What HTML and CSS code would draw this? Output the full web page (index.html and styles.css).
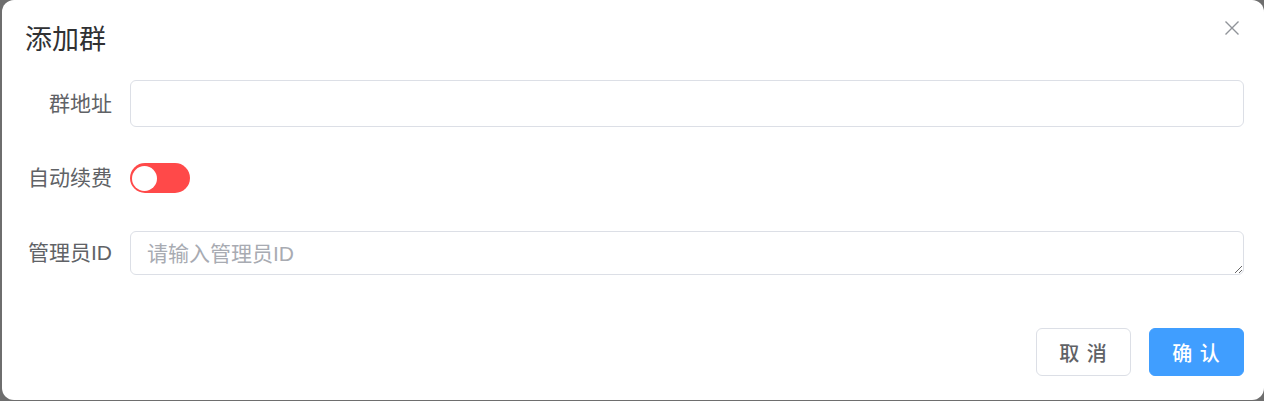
FILE: index.html
```html
<!DOCTYPE html>
<html lang="zh-CN">
<head>
<meta charset="utf-8">
<title>添加群</title>
<link rel="stylesheet" href="styles.css">
</head>
<body>
<div class="dialog">
  <header class="dialog-header">
    <span class="dialog-title">添加群</span>
    <button class="dialog-close" type="button" aria-label="关闭">
      <svg width="14" height="14" viewBox="0 0 14 14"><path d="M0.5 0.5 L13.5 13.5 M13.5 0.5 L0.5 13.5" stroke="#909399" stroke-width="1.4" fill="none"/></svg>
    </button>
  </header>
  <form class="form">
    <div class="row row-addr">
      <label class="label">群地址</label>
      <input class="input" type="text">
    </div>
    <div class="row row-switch">
      <label class="label">自动续费</label>
      <span class="switch"><span class="knob"></span></span>
    </div>
    <div class="row row-admin">
      <label class="label">管理员ID</label>
      <textarea class="textarea" placeholder="请输入管理员ID"></textarea>
    </div>
  </form>
  <footer class="dialog-footer">
    <button class="btn" type="button">取 消</button>
    <button class="btn btn-primary" type="button">确 认</button>
  </footer>
</div>
</body>
</html>
```

FILE: styles.css
```css
html, body {
  margin: 0;
  height: 100%;
  background: #6e6e6e;
  overflow: hidden;
}

.dialog {
  position: relative;
  margin-left: 2px;
  width: 1262px;
  height: 400px;
  box-sizing: border-box;
  background: #fff;
  border-radius: 12px;
  font-family: "Liberation Sans", "Noto Sans CJK SC", sans-serif;
  display: flex;
  flex-direction: column;
}

.dialog-header {
  padding: 22px 23px 0;
  height: 36px;
}

.dialog-title {
  font-size: 27px;
  line-height: 36px;
  color: #303133;
}

.dialog-close {
  position: absolute;
  top: 21px;
  right: 25px;
  width: 14px;
  height: 14px;
  padding: 0;
  border: 0;
  background: none;
  display: block;
}

.dialog-close svg {
  display: block;
}

.form {
  margin: 22px 0 0;
  padding-right: 20px;
}

.row {
  display: grid;
  grid-template-columns: 110px 1fr;
  column-gap: 18px;
  align-items: center;
}

.row-addr {
  height: 47px;
  margin-bottom: 28px;
}

.row-switch {
  height: 46px;
  margin-bottom: 30px;
}

.row-admin {
  height: 44px;
}

.label {
  text-align: right;
  font-size: 21px;
  line-height: 30px;
  color: #606266;
}

.input {
  box-sizing: border-box;
  height: 47px;
  width: 100%;
  border: 1px solid #dcdfe6;
  border-radius: 6px;
  padding: 0 16px;
  font: inherit;
  font-size: 21px;
  outline: none;
}

.textarea {
  box-sizing: border-box;
  display: block;
  height: 44px;
  width: 100%;
  border: 1px solid #dcdfe6;
  border-radius: 6px;
  padding: 6px 16px 0;
  font: inherit;
  font-size: 21px;
  line-height: 31px;
  color: #606266;
  resize: vertical;
  outline: none;
}

.textarea::placeholder {
  color: #a8abb2;
}

.switch {
  box-sizing: border-box;
  width: 60px;
  height: 30px;
  border-radius: 15px;
  background: #ff4949;
  display: flex;
  align-items: center;
  padding: 0 2px;
}

.knob {
  width: 25px;
  height: 25px;
  border-radius: 50%;
  background: #fff;
}

.dialog-footer {
  margin-top: 53px;
  padding-right: 20px;
  display: flex;
  justify-content: flex-end;
  gap: 18px;
}

.btn {
  box-sizing: border-box;
  width: 95px;
  height: 48px;
  border: 1px solid #dcdfe6;
  border-radius: 6px;
  background: #fff;
  color: #606266;
  font-family: "Liberation Sans", "Noto Sans CJK SC", sans-serif;
  font-size: 20px;
  font-weight: 500;
  letter-spacing: 1px;
  padding: 0;
}

.btn-primary {
  background: #409eff;
  border-color: #409eff;
  color: #fff;
}
```
